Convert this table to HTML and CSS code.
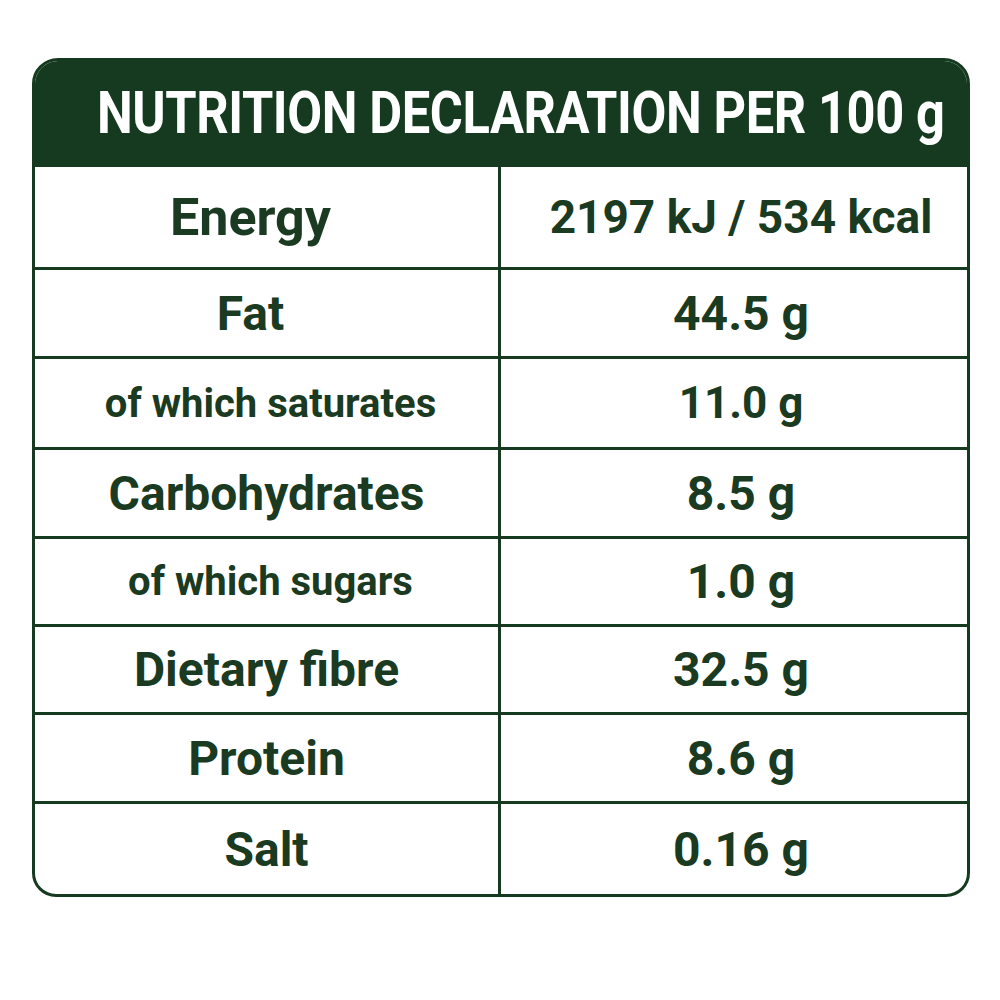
FILE: index.html
```html
<!DOCTYPE html>
<html lang="en">
<head>
<meta charset="utf-8">
<title>Nutrition Declaration</title>
<link rel="stylesheet" href="styles.css">
</head>
<body>
<div class="page">
  <div class="panel">
    <div class="head"><span class="head-text">NUTRITION DECLARATION PER 100 g</span></div>
    <div class="grid">
      <div class="cell name big shift r-energy">Energy</div>
      <div class="cell val mid r-energy">2197 kJ / 534 kcal</div>
      <div class="cell name shift r-fat">Fat</div>
      <div class="cell val r-fat">44.5 g</div>
      <div class="cell name sub r-sat">of which saturates</div>
      <div class="cell val small r-sat">11.0 g</div>
      <div class="cell name r-carb">Carbohydrates</div>
      <div class="cell val r-carb">8.5 g</div>
      <div class="cell name sub r-sug">of which sugars</div>
      <div class="cell val r-sug">1.0 g</div>
      <div class="cell name r-fib">Dietary fibre</div>
      <div class="cell val r-fib">32.5 g</div>
      <div class="cell name r-pro">Protein</div>
      <div class="cell val r-pro">8.6 g</div>
      <div class="cell name last r-salt">Salt</div>
      <div class="cell val last r-salt">0.16 g</div>
    </div>
  </div>
</div>
</body>
</html>
```
FILE: styles.css
```css
html, body {
  margin: 0;
  padding: 0;
  background: #ffffff;
}
.page {
  padding: 58px 0 0 32px;
}
.panel {
  width: 932px;
  border: 3px solid #163a1f;
  border-radius: 26px 26px 24px 24px;
  overflow: hidden;
  background: #ffffff;
}
.head {
  height: 106px;
  background: #163a1f;
  color: #ffffff;
  font-family: Roboto, "Liberation Sans", sans-serif;
  font-weight: 700;
  font-size: 60px;
  display: flex;
  align-items: center;
  padding-left: 62px;
  padding-bottom: 3px;
  box-sizing: border-box;
  white-space: nowrap;
  overflow: hidden;
}
.head-text {
  display: inline-block;
  transform: scaleX(0.844);
  transform-origin: left center;
  letter-spacing: -0.5px;
}
.grid {
  display: grid;
  grid-template-columns: 466px 1fr;
}
.cell {
  display: flex;
  align-items: center;
  justify-content: center;
  color: #1a3a21;
  font-family: Roboto, "Liberation Sans", sans-serif;
  font-weight: 700;
  font-size: 48px;
  border-bottom: 3px solid #163a1f;
  box-sizing: border-box;
  white-space: nowrap;
}
.name {
  border-right: 3px solid #163a1f;
}
.val {
  padding-left: 14px;
}
.big {
  font-size: 52px;
}
.mid {
  font-size: 46px;
}
.small {
  font-size: 44px;
}
.shift {
  padding-right: 32px;
}
.sub {
  font-size: 40px;
  padding-left: 8px;
}
.last {
  border-bottom: none;
}
.r-energy { height: 103px; }
.r-fat { height: 89px; }
.r-sat { height: 91px; }
.r-carb { height: 89px; }
.r-sug { height: 88px; }
.r-fib { height: 88px; }
.r-pro { height: 89px; }
.r-salt { height: 90px; }
```
